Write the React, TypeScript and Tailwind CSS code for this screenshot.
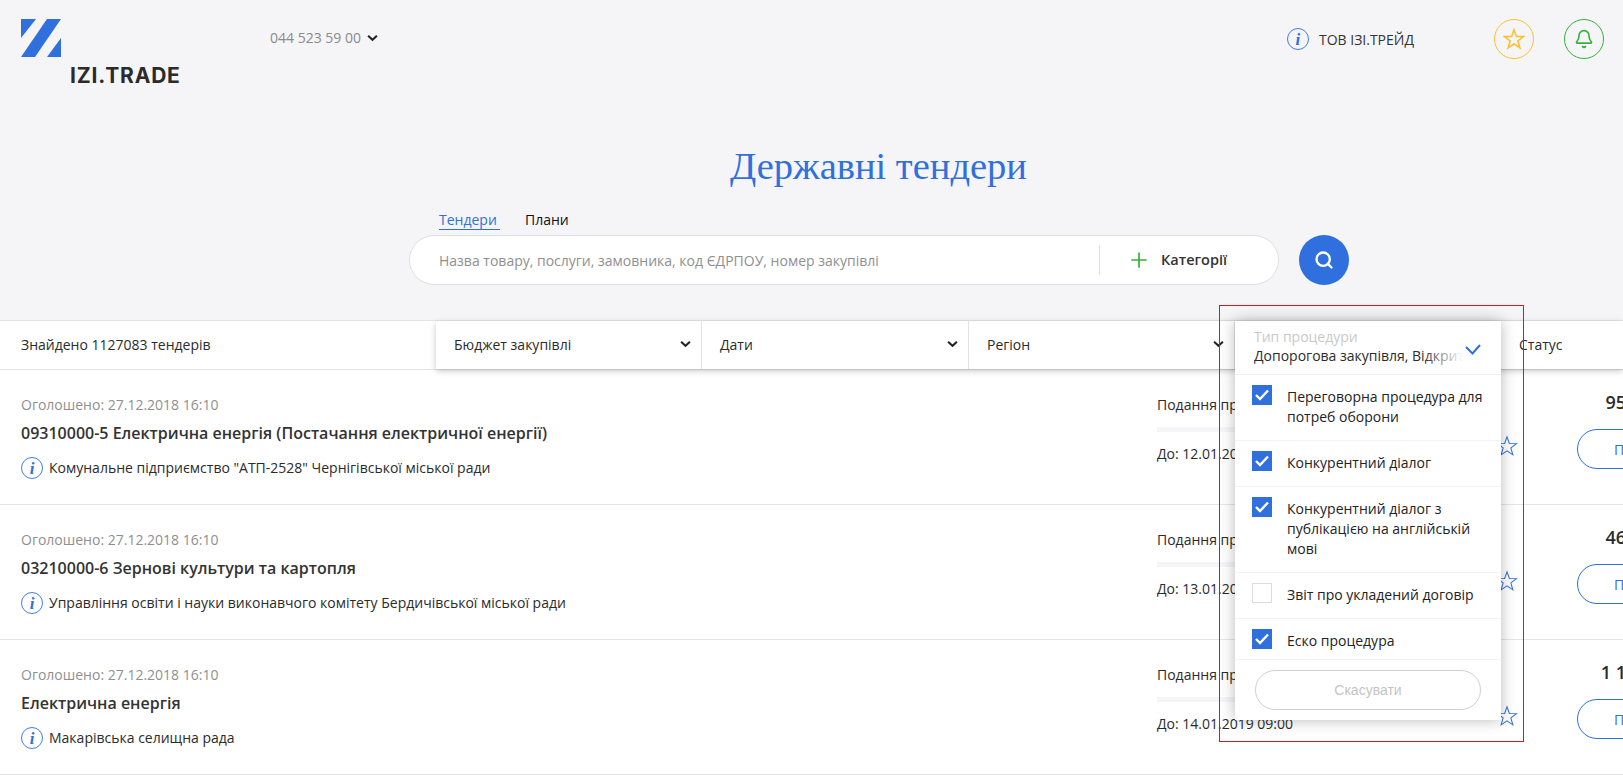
import React from "react";
import { Bell, Plus, Search } from "lucide-react";

const Chevron = ({ className = "" }: { className?: string }) => (
  <svg viewBox="0 0 12 8" className={`w-[11px] h-[8px] ${className}`} fill="none" stroke="#222" strokeWidth="2.2">
    <polyline points="1.2,1.5 6,6 10.8,1.5" />
  </svg>
);

const SharpStar = ({ size, stroke, width }: { size: number; stroke: string; width: number }) => (
  <svg viewBox="0 0 24 24" width={size} height={size} fill="none" stroke={stroke} strokeWidth={width} strokeLinejoin="miter">
    <polygon points="12,2 14.6,9.2 22.4,9.4 16.2,14.1 18.4,21.6 12,17.2 5.6,21.6 7.8,14.1 1.6,9.4 9.4,9.2" />
  </svg>
);

const Info = () => (
  <span className="flex w-[22px] h-[22px] shrink-0 items-center justify-center rounded-full border-[1.5px] border-[#3f7fe8] bg-transparent font-['Liberation_Serif',serif] italic font-bold text-[17px] leading-none text-[#2f6fde]">
    i
  </span>
);

const Check = ({ checked }: { checked: boolean }) => (
  <span
    className={`flex w-[20px] h-[20px] shrink-0 items-center justify-center ${
      checked ? "bg-[#2f6fde]" : "border border-[#dcdcdc] bg-white"
    }`}
  >
    {checked && (
      <svg viewBox="0 0 14 12" className="w-[14px] h-[12px]" fill="none" stroke="#fff" strokeWidth="2.4">
        <polyline points="1,6 5,10 13,1.5" />
      </svg>
    )}
  </span>
);

const rows = [
  {
    title: "09310000-5 Електрична енергія (Постачання електричної енергії)",
    org: 'Комунальне підприємство "АТП-2528" Чернігівської міської ради',
    until: "До: 12.01.2019 09:00",
    price: "95",
  },
  {
    title: "03210000-6 Зернові культури та картопля",
    org: "Управління освіти і науки виконавчого комітету Бердичівської міської ради",
    until: "До: 13.01.2019 09:00",
    price: "46",
  },
  {
    title: "Електрична енергія",
    org: "Макарівська селищна рада",
    until: "До: 14.01.2019 09:00",
    price: "1 1",
  },
];

const options = [
  { lines: "Переговорна процедура для потреб оборони", checked: true, h: "h-[66px]" },
  { lines: "Конкурентний діалог", checked: true, h: "h-[46px]" },
  { lines: "Конкурентний діалог з публікацією на англійській мові", checked: true, h: "h-[86px]" },
  { lines: "Звіт про укладений договір", checked: false, h: "h-[46px]" },
  { lines: "Еско процедура", checked: true, h: "h-[41px]" },
];

const filters = [
  { name: "Бюджет закупівлі", w: "w-[266px]" },
  { name: "Дати", w: "w-[267px]" },
  { name: "Регіон", w: "w-[266px]" },
];

export default function App() {
  return (
    <div className="relative h-screen w-full overflow-hidden bg-white font-['Open_Sans',sans-serif] text-[14px] text-[#2b2b2b]">
      <header className="h-[320px] bg-[#f5f5f8] flex flex-col">
        <div className="flex h-[84px] shrink-0 items-start pt-[19px] pl-[21px]">
          <div className="w-[249px] shrink-0">
            <svg viewBox="0 0 40 38" className="w-[40px] h-[38px]" fill="#2f6fde">
              <polygon points="0,0 15,0 0,19" />
              <polygon points="26,0 40,0 14,38 0,38" />
              <polygon points="40,19 40,38 26,38" />
            </svg>
            <div className="ml-[49px] mt-[9px] whitespace-nowrap font-['Inter',sans-serif] font-bold text-[21px] leading-[20px] tracking-[0.8px] text-[#2b2b2b]">
              IZI.TRADE
            </div>
          </div>
          <div className="flex items-center gap-[6px] pt-[9px] leading-[20px] text-[#8a8a8a]">
            <span>044 523 59 00</span>
            <Chevron />
          </div>
          <div className="ml-[909px] flex items-center gap-[10px] pt-[9px]">
            <Info />
            <span className="text-[#333]">ТОВ ІЗІ.ТРЕЙД</span>
          </div>
          <div className="ml-[80px] flex h-[40px] w-[40px] items-center justify-center rounded-full border border-[#fbc02d]">
            <SharpStar size={22} stroke="#fbc02d" width={1.7} />
          </div>
          <div className="ml-[30px] flex h-[40px] w-[40px] items-center justify-center rounded-full border border-[#37b037]">
            <Bell size={20} strokeWidth={2} color="#37b037" />
          </div>
        </div>
        <h1 className="mt-[60px] ml-[730px] h-[44px] whitespace-nowrap font-['Liberation_Serif',serif] text-[38.5px] leading-[44px] text-[#2f6fde]">
          Державні тендери
        </h1>
        <div className="ml-[439px] mt-[22px] flex h-[20px] leading-[20px]">
          <span className="w-[86px] text-[#2f6fde]">
            <span className="inline-block w-[61px] border-b border-[#2f6fde] leading-[18px]">Тендери</span>
          </span>
          <span className="text-[#111]">Плани</span>
        </div>
        <div className="ml-[409px] mt-[5px] flex items-center gap-[20px]">
          <div className="flex h-[50px] w-[870px] items-center rounded-full border border-[#dedede] bg-white pl-[29px]">
            <span className="w-[660px] text-[#8f8f8f]">Назва товару, послуги, замовника, код ЄДРПОУ, номер закупівлі</span>
            <span className="h-[30px] w-px bg-[#dedede]" />
            <Plus size={24} strokeWidth={1.7} color="#37b037" className="ml-[27px]" />
            <span className="ml-[10px] text-[14.5px] font-semibold text-[#333]">Категорії</span>
          </div>
          <div className="flex h-[50px] w-[50px] items-center justify-center rounded-full bg-[#2f6fde]">
            <Search size={20} strokeWidth={2.8} color="#fff" />
          </div>
        </div>
      </header>

      <div className="flex h-[50px] border-y border-[#e3e3e3] bg-white">
        <div className="flex w-[436px] shrink-0 items-center pb-[2px] pl-[21px]">Знайдено 1127083 тендерів</div>
        <div className="flex flex-1 shadow-[0_2px_6px_rgba(0,0,0,0.22)]">
          {filters.map((f) => (
            <div key={f.name} className={`flex ${f.w} shrink-0 items-center justify-between border-r border-[#e3e3e3] pb-[2px] pl-[18px] pr-[10px]`}>
              <span>{f.name}</span>
              <Chevron />
            </div>
          ))}
          <div className="w-[266px] shrink-0" />
          <div className="flex items-center pb-[2px] pl-[18px]">Статус</div>
        </div>
      </div>

      {rows.map((r) => (
        <div key={r.title} className="relative flex h-[135px] border-b border-[#e5e5e5]">
          <div className="w-[1157px] shrink-0 pl-[21px] pt-[25px]">
            <div className="leading-[20px] text-[#8f8f8f]">Оголошено: 27.12.2018 16:10</div>
            <div className="mt-[7px] text-[16px] font-semibold leading-[22px] text-[#333]">{r.title}</div>
            <div className="mt-[13px] flex items-center gap-[6px] leading-[22px]">
              <Info />
              <span>{r.org}</span>
            </div>
          </div>
          <div className="w-[320px] shrink-0 pt-[25px]">
            <div className="leading-[20px]">Подання пропозицій</div>
            <div className="mt-[12px] h-[5px] w-[200px] bg-[#f5f5f8]" />
            <div className="mt-[12px] leading-[20px]">{r.until}</div>
          </div>
          <div className="w-[100px] shrink-0 pt-[65px]">
            <div className="ml-[19px]">
              <SharpStar size={22} stroke="#2f6fde" width={1.1} />
            </div>
          </div>
          <div className="absolute left-[1577px] top-[20px] w-[49px]">
            <div className="text-right text-[18px] font-semibold leading-[24px]">{r.price}</div>
            <div className="mt-[15px] flex h-[40px] w-[100px] items-center rounded-full border border-[#2f6fde] pl-[36px] text-[#2f6fde]">П</div>
          </div>
        </div>
      ))}

      <div className="pointer-events-none absolute left-[1219px] top-[305px] h-[437px] w-[305px] border border-[#e0141e]" />

      <div className="absolute left-[1235px] top-[321px] w-[266px] bg-white shadow-[0_0_14px_rgba(0,0,0,0.28)]">
        <div className="relative h-[54px] border-b border-[#f0f0f0] pl-[19px] pr-[18px] pt-[6px]">
          <div className="leading-[20px] text-[#c9c9c9]">Тип процедури</div>
          <div className="w-[209px] overflow-hidden whitespace-nowrap leading-[18px]">Допорогова закупівля, Відкриті торги</div>
          <div className="absolute left-[188px] top-[26px] h-[20px] w-[40px] bg-gradient-to-r from-transparent to-white" />
          <svg viewBox="0 0 16 11" className="absolute left-[230px] top-[23px] w-[16px] h-[11px]" fill="none" stroke="#2f6fde" strokeWidth="2">
            <polyline points="1,3 7.5,9.5 15,1" />
          </svg>
        </div>
        {options.map((o) => (
          <div key={o.lines} className={`flex ${o.h} items-start gap-[15px] border-b border-[#f3f3f3] pl-[17px] pr-[18px] pt-[10px]`}>
            <Check checked={o.checked} />
            <span className="pt-[2px] leading-[20px] text-[#222]">{o.lines}</span>
          </div>
        ))}
        <div className="h-[60px] px-[20px] pt-[10px]">
          <div className="flex h-[40px] items-center justify-center rounded-full border border-[#cfcfcf] font-['Liberation_Sans',sans-serif] text-[#c4c4c4]">
            Скасувати
          </div>
        </div>
      </div>
    </div>
  );
}
